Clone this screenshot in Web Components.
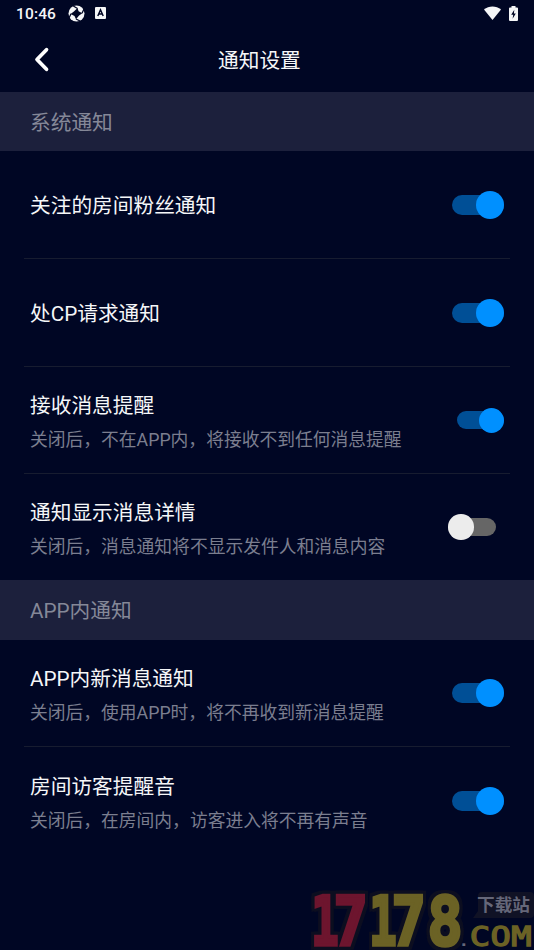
<!DOCTYPE html>
<html lang="zh-CN"><head><meta charset="utf-8"><title>通知设置</title>
<style>
html,body{margin:0;height:100%;background:#000624}
body{font-family:Roboto,"Noto Sans CJK SC",sans-serif;color:#f5f6f8;overflow:hidden}
</style></head><body>
<settings-page>
<status-bar></status-bar>
<title-bar>通知设置</title-bar>
<section-title>系统通知</section-title>
<setting-row>关注的房间粉丝通知<toggle-switch slot="control" kind="large"></toggle-switch></setting-row>
<setting-row>处CP请求通知<toggle-switch slot="control" kind="large"></toggle-switch></setting-row>
<setting-row>接收消息提醒<span slot="note">关闭后，不在APP内，将接收不到任何消息提醒</span><toggle-switch slot="control" kind="small"></toggle-switch></setting-row>
<setting-row last>通知显示消息详情<span slot="note">关闭后，消息通知将不显示发件人和消息内容</span><toggle-switch slot="control" kind="off"></toggle-switch></setting-row>
<section-title>APP内通知</section-title>
<setting-row>APP内新消息通知<span slot="note">关闭后，使用APP时，将不再收到新消息提醒</span><toggle-switch slot="control" kind="large"></toggle-switch></setting-row>
<setting-row last>房间访客提醒音<span slot="note">关闭后，在房间内，访客进入将不再有声音</span><toggle-switch slot="control" kind="large"></toggle-switch></setting-row>
<site-mark></site-mark>
</settings-page>
<script>
const define=(name,html)=>customElements.define(name,class extends HTMLElement{
  constructor(){super();this.attachShadow({mode:'open'}).innerHTML=html}
});
define('settings-page',`<style>
:host{display:grid;grid-template-rows:28px 64px 59.400px 107.600px 108px 107px 106.400px 59.300px 107.600px 107.500px;position:relative;height:950px;width:534px;background:#000624;overflow:hidden}
</style><slot></slot>`);
define('status-bar',`<style>
:host{display:flex;box-sizing:border-box;padding:0 16px 2px 16px;align-items:center;font-size:15.5px;font-weight:500;letter-spacing:.15px}
svg{display:block}span{padding-top:2px}.ring{margin-left:12px}.a{margin-left:10px}.wifi{margin-left:auto}.bat{margin-left:8px}
</style><span>10:46</span>
<svg class="ring" width="17" height="17" viewBox="0 0 17 17"><circle cx="8.5" cy="8.5" r="8" fill="#f5f6f8"/><path d="M9.500 3 10.600 6.200l3.700 2-3.200 2.200L8 14.300 6.500 11 2.600 8.900 5.900 6.600Z" fill="#000624"/><path d="M9.500 3.500 5.300 1M14 8.300 16 4M8 14l4 2M3 8.700 1 13" stroke="#000624" stroke-width="1.300"/></svg>
<svg class="a" width="11" height="12" viewBox="0 0 11 12"><rect width="11" height="12" rx="1" fill="#f5f6f8"/><path d="M2.8 9 5.5 2.8 8.2 9M3.7 7h3.6" fill="none" stroke="#000624" stroke-width="1.5"/></svg>
<svg class="wifi" width="17" height="14" viewBox="0 0 17 14"><path d="M0 3.6C4.8-.7 12.2-.7 17 3.6L8.5 14Z" fill="#f5f6f8"/></svg>
<svg class="bat" width="9" height="15" viewBox="0 0 9 15"><path d="M2.5 0h4v1.4H8q1 0 1 1V14q0 1-1 1H1q-1 0-1-1V2.400q0-1 1-1h1.500Z" fill="#f5f6f8"/><path d="M5.300 3.800 2.200 8.700h2l-.6 4 3.200-5.200H4.900Z" fill="#000624"/></svg>`);
define('title-bar',`<style>
:host{display:grid;grid-template-columns:218px 1fr;align-items:center;font-size:20.7px;line-height:30px}
svg{display:block;margin-left:33px}span{padding-top:1px}
</style><svg width="17" height="26" viewBox="0 0 17 26"><path d="M13.500 2.700 4 12.500l9.500 9.800" fill="none" stroke="#fff" stroke-width="3.700" stroke-linecap="round" stroke-linejoin="round"/></svg><span><slot></slot></span>`);
define('section-title',`<style>:host{display:flex;align-items:center;padding:2.500px 30px 0;background:#1c203c;color:#858898;font-size:20.7px;line-height:30px}</style><span><slot></slot></span>`);
define('setting-row',`<style>
:host{display:flex;margin:0 24px;padding:0 6px;border-bottom:1px solid #171c30;align-items:center;justify-content:space-between;font-size:20.7px;line-height:30px;white-space:nowrap}
:host([last]){border-color:transparent}
.label{padding-top:2.500px}
.note{color:#7b7e8f;font-size:17.78px;line-height:26px}.note ::slotted(span){display:block;padding-top:6px;margin-bottom:-1.500px}
</style><div class="label"><div><slot></slot></div><div class="note"><slot name="note"></slot></div></div><slot name="control"></slot>`);
define('toggle-switch',`<style>
:host{display:block;width:52px;padding-top:.800px}
.track{height:20px;border-radius:10px;background:#004f96;display:flex;align-items:center;justify-content:flex-end}
.knob{flex:none;width:28px;height:28px;border-radius:50%;background:#0090ff}
:host([kind=small]),:host([kind=off]){width:47.500px}
:host([kind=small]) .track,:host([kind=off]) .track{height:18px}
:host([kind=small]) .knob,:host([kind=off]) .knob{width:25.500px;height:25.500px}
:host([kind=off]){margin-right:8.500px}
:host([kind=off]) .track{background:#666;justify-content:flex-start}
:host([kind=off]) .knob{background:#ececec}
</style><div class="track"><div class="knob"></div></div>`);
define('site-mark',`<style>
:host{position:absolute;left:304px;top:884px;width:230px;height:66px}
svg{display:block}
.num{font:700 68px "DejaVu Sans Mono",monospace;stroke-width:3.500;stroke-linejoin:miter}
.com{font:400 26px "DejaVu Sans Mono",monospace;stroke-width:1.300}
.site{font-family:"Noto Sans CJK SC",sans-serif}
.red{fill:#6d152e;stroke:#6d152e}.gold{fill:#6b6225;stroke:#6b6225}
.edge{filter:drop-shadow(3px 0 #0c0e20) drop-shadow(-3px 0 #0c0e20) drop-shadow(0 3px #0c0e20) drop-shadow(0 -3px #0c0e20)}
.com.edge{filter:none}
</style><svg width="230" height="66" viewBox="0 0 230 66">
<path d="M178 8h48q4 0 4 4v18q0 4-4 4h-57l5-7V12q0-4 4-4Z" fill="#101225"/>
<g class="num edge">
<text class="red" transform="translate(7 61) scale(.680 1)">1</text>
<text class="red" transform="translate(29.500 61) scale(.840 1)">7</text>
<text class="gold" transform="translate(65 61) scale(.680 1)">1</text>
<text class="gold" transform="translate(87.500 61) scale(.840 1)">7</text>
<text class="gold" transform="translate(123.500 61) scale(.860 1)">8</text>
</g>
<text class="site" x="173" y="26.500" font-size="17" font-weight="700" textLength="53" lengthAdjust="spacingAndGlyphs" fill="#656779">下载站</text>
<g class="com edge"><text transform="translate(0 62) scale(1.300 1)"><tspan x="117.500" font-size="18" fill="#656779">.</tspan><tspan class="gold" x="127.500">C</tspan><tspan class="gold" x="143.500">O</tspan><tspan class="gold" x="159.500">M</tspan></text></g>
</svg>`);
</script></body></html>
